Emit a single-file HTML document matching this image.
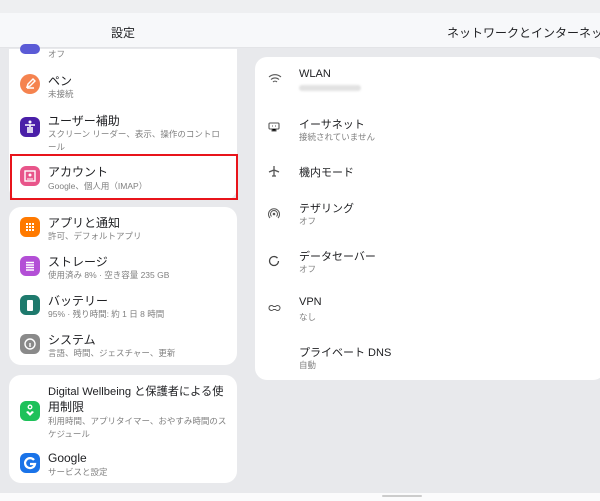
<!DOCTYPE html>
<html><head><meta charset="utf-8"><style>
*{margin:0;padding:0;box-sizing:border-box}
body{width:600px;height:501px;background:#e8e9ec;font-family:"Liberation Sans","Noto Sans CJK JP",sans-serif;position:relative;overflow:hidden;color:#222}
.abs{position:absolute}
.top{left:0;top:0;width:600px;height:13px;background:#eeeff1}
.hdr{left:0;top:13px;width:600px;height:35px;background:#f7f8fa;border-bottom:1px solid #e3e4e7}
.card{position:absolute;background:#fff;border-radius:12px}
.t{position:absolute;font-size:12px;color:#202124;white-space:nowrap}
.s{position:absolute;font-size:8.5px;color:#808080;white-space:nowrap}
.ic{position:absolute;width:20px;height:20px;border-radius:6px}
</style></head><body>
<div class="abs top"></div>
<div class="abs hdr"></div>
<div class="t" style="left:111px;top:24px;font-size:12px">設定</div>
<div class="t" style="left:447px;top:24px;font-size:12px">ネットワークとインターネット</div>

<div class="card" style="left:9px;top:49px;width:228px;height:151px;border-radius:0 0 12px 12px"></div>
<div class="card" style="left:9px;top:207px;width:228px;height:158px"></div>
<div class="card" style="left:9px;top:375px;width:228px;height:108px"></div>
<div class="card" style="left:255px;top:57px;width:350px;height:323px"></div>
<div class="abs" style="left:10px;top:154px;width:228px;height:46px;border:2px solid #e8141b"></div>
<div class="abs" style="left:0;top:493px;width:600px;height:8px;background:#fbfbfc"></div>
<div class="abs" style="left:382px;top:495px;width:40px;height:2px;background:#ccc;border-radius:1px"></div>

<div class="ic" style="left:20px;top:44px;height:10px;border-radius:10px;background:#5b5bd6"></div>
<div class="ic" style="left:20px;top:74px;border-radius:10px;background:#f5834f"><svg width="20" height="20"><path d="M7 13l1-3 5-5 2 2-5 5z M7 14h7" stroke="#fff" stroke-width="1.4" fill="none"/></svg></div>
<div class="ic" style="left:20px;top:117px;background:#4a1fa8"><svg width="20" height="20"><circle cx="10" cy="5" r="1.5" fill="#fff"/><path d="M5 8h10M10 8v8M8 10v6M12 10v6" stroke="#fff" stroke-width="1.6"/></svg></div>
<div class="ic" style="left:20px;top:166px;background:#e8558a"><svg width="20" height="20"><rect x="5" y="5" width="10" height="10" fill="none" stroke="#fff" stroke-width="1.4"/><circle cx="10" cy="9" r="1.5" fill="#fff"/><path d="M7 13h6" stroke="#fff"/></svg></div>
<div class="ic" style="left:20px;top:217px;background:#ff7a00"><svg width="20" height="20" fill="#fff"><rect x="6" y="6" width="2" height="2"/><rect x="9" y="6" width="2" height="2"/><rect x="12" y="6" width="2" height="2"/><rect x="6" y="9" width="2" height="2"/><rect x="9" y="9" width="2" height="2"/><rect x="12" y="9" width="2" height="2"/><rect x="6" y="12" width="2" height="2"/><rect x="9" y="12" width="2" height="2"/><rect x="12" y="12" width="2" height="2"/></svg></div>
<div class="ic" style="left:20px;top:256px;background:#b34fd6"><svg width="20" height="20"><path d="M6 6.5h8M6 9h8M6 11.5h8M6 14h8" stroke="#fff" stroke-width="1.5"/></svg></div>
<div class="ic" style="left:20px;top:295px;background:#1e7a6d"><svg width="20" height="20"><rect x="7" y="5" width="6" height="11" rx="1" fill="#fff"/></svg></div>
<div class="ic" style="left:20px;top:334px;background:#8a8a8a"><svg width="20" height="20"><circle cx="10" cy="10" r="5" fill="none" stroke="#fff" stroke-width="1.4"/><path d="M10 9v4" stroke="#fff" stroke-width="1.4"/></svg></div>
<div class="ic" style="left:20px;top:401px;background:#1ec15a"><svg width="20" height="20"><circle cx="10" cy="6" r="1.8" fill="none" stroke="#fff" stroke-width="1.3"/><path d="M6 11l4 4 4-4-2-1-2 2-2-2z" fill="#fff"/></svg></div>
<div class="ic" style="left:20px;top:453px;background:#1a73e8"><svg width="20" height="20"><path d="M14 7a5 5 0 1 0 1 4h-5" stroke="#fff" stroke-width="2.2" fill="none"/></svg></div>

<div class="s" style="left:48px;top:48px">オフ</div>
<div class="t" style="left:48px;top:72px">ペン</div><div class="s" style="left:48px;top:88px">未接続</div>
<div class="t" style="left:48px;top:112px">ユーザー補助</div><div class="s" style="left:48px;top:128px">スクリーン リーダー、表示、操作のコントロ</div><div class="s" style="left:48px;top:141px">ール</div>
<div class="t" style="left:48px;top:163px">アカウント</div><div class="s" style="left:48px;top:180px">Google、個人用（IMAP）</div>
<div class="t" style="left:48px;top:214px">アプリと通知</div><div class="s" style="left:48px;top:230px">許可、デフォルトアプリ</div>
<div class="t" style="left:48px;top:253px">ストレージ</div><div class="s" style="left:48px;top:269px">使用済み 8% · 空き容量 235 GB</div>
<div class="t" style="left:48px;top:292px">バッテリー</div><div class="s" style="left:48px;top:308px">95% · 残り時間: 約 1 日 8 時間</div>
<div class="t" style="left:48px;top:331px">システム</div><div class="s" style="left:48px;top:347px">言語、時間、ジェスチャー、更新</div>
<div class="t" style="left:48px;top:383px;font-size:11.2px">Digital Wellbeing と保護者による使</div><div class="t" style="left:48px;top:398px">用制限</div>
<div class="s" style="left:48px;top:415px">利用時間、アプリタイマー、おやすみ時間のス</div><div class="s" style="left:48px;top:428px">ケジュール</div>
<div class="t" style="left:48px;top:451px">Google</div><div class="s" style="left:48px;top:466px">サービスと設定</div>

<svg class="abs" style="left:268px;top:74px" width="14" height="10"><path d="M1 3a9 9 0 0 1 12 0M3 5.5a6 6 0 0 1 8 0M5 8a3 3 0 0 1 4 0" stroke="#555" stroke-width="1.1" fill="none"/></svg>
<svg class="abs" style="left:268px;top:122px" width="12" height="10"><rect x="1" y="1" width="10" height="6" rx="1" fill="none" stroke="#555" stroke-width="1.1"/><path d="M4 7v2h4V7M4 4h1M7 4h1" stroke="#555" stroke-width="1"/></svg>
<svg class="abs" style="left:268px;top:165px" width="12" height="12"><path d="M6 1v10M1 7l5-2 5 2M4 11h4" stroke="#555" stroke-width="1.3" fill="none"/></svg>
<svg class="abs" style="left:268px;top:208px" width="12" height="12"><circle cx="6" cy="6" r="1.3" fill="#555"/><path d="M3.5 8.5a3.5 3.5 0 1 1 5 0M2 10a5.5 5.5 0 1 1 8 0" stroke="#555" stroke-width="1" fill="none"/></svg>
<svg class="abs" style="left:268px;top:255px" width="12" height="12"><circle cx="6" cy="6" r="4.5" stroke="#444" stroke-width="1.3" fill="none" stroke-dasharray="25 4"/></svg>
<svg class="abs" style="left:268px;top:304px" width="13" height="8"><path d="M1 4a2.5 2.5 0 0 1 4.5-1.5h2A2.5 2.5 0 1 1 7.5 5.5h-2A2.5 2.5 0 0 1 1 4z" stroke="#555" stroke-width="1" fill="none"/></svg>

<div class="t" style="left:299px;top:68px;font-size:11px">WLAN</div><div class="abs" style="left:299px;top:85px;width:62px;height:6px;background:#e2e2e2;border-radius:3px;filter:blur(1px)"></div>
<div class="t" style="left:299px;top:116px;font-size:11px">イーサネット</div><div class="s" style="left:299px;top:131px">接続されていません</div>
<div class="t" style="left:299px;top:164px;font-size:11px">機内モード</div>
<div class="t" style="left:299px;top:200px;font-size:11px">テザリング</div><div class="s" style="left:299px;top:215px">オフ</div>
<div class="t" style="left:299px;top:248px;font-size:11px">データセーバー</div><div class="s" style="left:299px;top:263px">オフ</div>
<div class="t" style="left:299px;top:296px;font-size:11px">VPN</div><div class="s" style="left:299px;top:311px">なし</div>
<div class="t" style="left:299px;top:344px;font-size:11px">プライベート DNS</div><div class="s" style="left:299px;top:359px">自動</div>
</body></html>
